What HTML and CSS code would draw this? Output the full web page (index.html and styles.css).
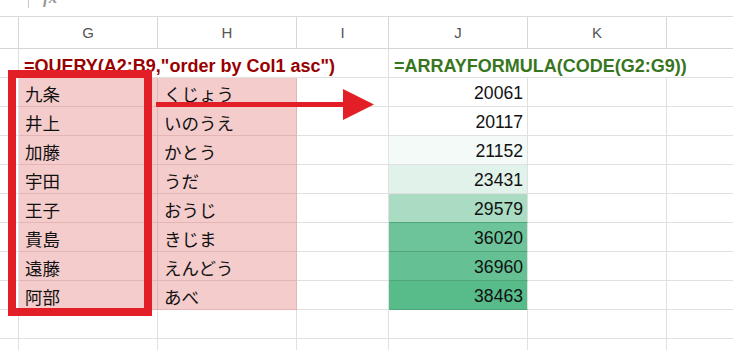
FILE: index.html
```html
<!DOCTYPE html>
<html lang="ja">
<head>
<meta charset="utf-8">
<title>QUERY sort</title>
<link rel="stylesheet" href="styles.css">
</head>
<body>
<div class="sheet">
  <div class="topbar">
    <span class="sep"></span>
    <span class="fx">fx</span>
  </div>
  <div class="grid">
    <div class="c rh hdr"></div>
    <div class="c hdr">G</div>
    <div class="c hdr">H</div>
    <div class="c hdr">I</div>
    <div class="c hdr">J</div>
    <div class="c hdr">K</div>
    <div class="c hdr last"></div>

    <div class="c rh"></div>
    <div class="c formula red span3">=QUERY(A2:B9,"order by Col1 asc")</div>
    <div class="c formula green span3 last">=ARRAYFORMULA(CODE(G2:G9))</div>

    <div class="c rh"></div><div class="c pk">九条</div><div class="c pk">くじょう</div><div class="c"></div><div class="c num" style="background:#ffffff">20061</div><div class="c"></div><div class="c last"></div>
    <div class="c rh"></div><div class="c pk">井上</div><div class="c pk">いのうえ</div><div class="c"></div><div class="c num" style="background:#fefffe">20117</div><div class="c"></div><div class="c last"></div>
    <div class="c rh"></div><div class="c pk">加藤</div><div class="c pk">かとう</div><div class="c"></div><div class="c num" style="background:#f4faf7">21152</div><div class="c"></div><div class="c last"></div>
    <div class="c rh"></div><div class="c pk">宇田</div><div class="c pk">うだ</div><div class="c"></div><div class="c num" style="background:#e0f2e9">23431</div><div class="c"></div><div class="c last"></div>
    <div class="c rh"></div><div class="c pk">王子</div><div class="c pk">おうじ</div><div class="c"></div><div class="c num gr" style="background:#a9dcc3">29579</div><div class="c"></div><div class="c last"></div>
    <div class="c rh"></div><div class="c pk">貴島</div><div class="c pk">きじま</div><div class="c"></div><div class="c num gr" style="background:#6dc49a">36020</div><div class="c"></div><div class="c last"></div>
    <div class="c rh"></div><div class="c pk">遠藤</div><div class="c pk">えんどう</div><div class="c"></div><div class="c num gr" style="background:#65c194">36960</div><div class="c"></div><div class="c last"></div>
    <div class="c rh"></div><div class="c pk">阿部</div><div class="c pk">あべ</div><div class="c"></div><div class="c num gr" style="background:#57bb8a">38463</div><div class="c"></div><div class="c last"></div>

    <div class="c rh"></div><div class="c"></div><div class="c"></div><div class="c"></div><div class="c"></div><div class="c"></div><div class="c last"></div>
    <div class="c rh"></div><div class="c"></div><div class="c"></div><div class="c"></div><div class="c"></div><div class="c"></div><div class="c last"></div>
  </div>

  <div class="redbox"></div>
  <svg class="arrow" width="733" height="350" viewBox="0 0 733 350">
    <rect x="156" y="102" width="190" height="5" fill="#e21f26"/>
    <polygon points="343,89 374,104.5 343,120" fill="#e21f26"/>
  </svg>
</div>
</body>
</html>
```

FILE: styles.css
```css
html, body {
  margin: 0;
  padding: 0;
  background: #ffffff;
}
body {
  width: 733px;
  height: 350px;
  overflow: hidden;
  font-family: "Liberation Sans", Arial, "Noto Sans CJK JP", sans-serif;
}
.sheet {
  position: relative;
  width: 733px;
  height: 350px;
  overflow: hidden;
}
.topbar {
  height: 16px;
  border-bottom: 1px solid #dadada;
  display: flex;
  align-items: flex-end;
  padding-left: 28px;
  gap: 14px;
  overflow: hidden;
}
.sep {
  width: 1px;
  height: 24px;
  background: #c8c8c8;
  margin-bottom: 8px;
}
.fx {
  font-family: "Liberation Serif", serif;
  font-style: italic;
  font-weight: bold;
  font-size: 17px;
  color: #9a9a9a;
  line-height: 17px;
  margin-bottom: 10px;
}
.grid {
  display: grid;
  grid-template-columns: 19px 139px 139px 92px 139px 139px 1fr;
  grid-template-rows: 32px repeat(11, 29px);
}
.c {
  box-sizing: border-box;
  border-right: 1px solid #e0e0e0;
  border-bottom: 1px solid #e0e0e0;
  display: flex;
  align-items: center;
  padding: 1px 5px 0 5px;
  font-size: 17.6px;
  color: #111;
  white-space: nowrap;
  overflow: visible;
}
.last {
  border-right: none;
}
.rh {
  padding: 0;
}
.hdr {
  justify-content: center;
  font-size: 15px;
  color: #555;
  padding: 0;
  border-color: #d6d6d6;
}
.span3 {
  grid-column: span 3;
}
.formula {
  font-weight: bold;
  font-size: 18px;
  padding: 7px 0 0 5px;
}
.formula.red {
  color: #990000;
}
.formula.green {
  color: #38761d;
}
.pk {
  background: #f4cccc;
  border-color: #e3b5b5;
  font-family: "Noto Sans CJK JP", sans-serif;
  font-size: 17.5px;
  padding-left: 6px;
  padding-top: 2px;
}
.num {
  justify-content: flex-end;
  padding-right: 4px;
  padding-top: 2px;
}
.gr {
  border-bottom-color: #4fa67b;
}
.redbox {
  position: absolute;
  left: 8px;
  top: 70px;
  width: 144px;
  height: 246px;
  box-sizing: border-box;
  border: 8px solid #e21f26;
}
.arrow {
  position: absolute;
  left: 0;
  top: 0;
}
```
